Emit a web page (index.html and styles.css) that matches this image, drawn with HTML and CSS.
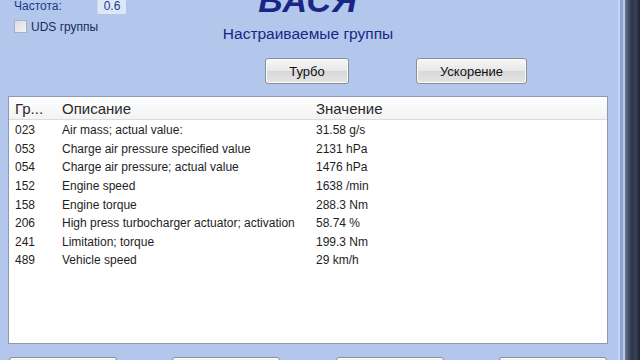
FILE: index.html
```html
<!DOCTYPE html>
<html lang="ru">
<head>
    <meta charset="UTF-8">
    <meta name="viewport" content="width=device-width, initial-scale=1.0">
    <title>Настраиваемые группы</title>
    <link rel="stylesheet" href="styles.css">
</head>
<body>
    <div class="window">
        <div class="top">
            <div class="settings">
                <div class="freq">
                    <span class="freq-label">Частота:</span>
                    <span class="freq-value">0.6</span>
                </div>
                <label class="uds">
                    <span class="check"></span>
                    UDS группы
                </label>
            </div>
            <div class="title">
                <div class="logo">ВАСЯ</div>
                <div class="subtitle">Настраиваемые группы</div>
            </div>
        </div>

        <div class="group-buttons">
            <button class="btn btn-turbo">Турбо</button>
            <button class="btn btn-accel">Ускорение</button>
        </div>

        <div class="list">
            <div class="list-head">
                <span class="col-grp">Гр...</span>
                <span class="col-desc">Описание</span>
                <span class="col-val">Значение</span>
            </div>
            <div class="list-row"><span class="col-grp">023</span><span class="col-desc">Air mass; actual value:</span><span class="col-val">31.58 g/s</span></div>
            <div class="list-row"><span class="col-grp">053</span><span class="col-desc">Charge air pressure specified value</span><span class="col-val">2131 hPa</span></div>
            <div class="list-row"><span class="col-grp">054</span><span class="col-desc">Charge air pressure; actual value</span><span class="col-val">1476 hPa</span></div>
            <div class="list-row"><span class="col-grp">152</span><span class="col-desc">Engine speed</span><span class="col-val">1638 /min</span></div>
            <div class="list-row"><span class="col-grp">158</span><span class="col-desc">Engine torque</span><span class="col-val">288.3 Nm</span></div>
            <div class="list-row"><span class="col-grp">206</span><span class="col-desc">High press turbocharger actuator; activation</span><span class="col-val">58.74 %</span></div>
            <div class="list-row"><span class="col-grp">241</span><span class="col-desc">Limitation; torque</span><span class="col-val">199.3 Nm</span></div>
            <div class="list-row"><span class="col-grp">489</span><span class="col-desc">Vehicle speed</span><span class="col-val">29 km/h</span></div>
        </div>

        <div class="bottom-buttons">
            <button class="btn btn-bottom"></button>
            <button class="btn btn-bottom"></button>
            <button class="btn btn-bottom"></button>
            <button class="btn btn-bottom"></button>
        </div>
    </div>
    <div class="frame"></div>
</body>
</html>
```

FILE: styles.css
```css
body {
    margin: 0;
    height: 360px;
    overflow: hidden;
    display: flex;
    font-family: "Liberation Sans", Arial, sans-serif;
    background-color: #b3c7ec;
}

.window {
    width: 600px;
    padding: 0 10px 0 8px;
    display: flex;
    flex-direction: column;
    background-color: #b3c7ec;
}

.window > * {
    flex-shrink: 0;
}

.top {
    height: 58px;
    display: grid;
    grid-template-columns: 1fr auto 1fr;
}

.settings {
    padding-left: 6px;
    font-size: 12px;
}

.freq {
    display: flex;
    align-items: flex-start;
    height: 15px;
}

.freq-label {
    width: 83px;
    color: #1c3988;
    line-height: 13px;
}

.freq-value {
    width: 28px;
    height: 14px;
    line-height: 13px;
    text-align: center;
    color: #1c3988;
    background-color: #dde7f8;
    border-left: 1px solid #c9d6ee;
}

.uds {
    display: flex;
    align-items: center;
    gap: 4px;
    margin-top: 5px;
    color: #1b2a5c;
    line-height: 12px;
}

.check {
    width: 11px;
    height: 11px;
    border: 1px solid #a7b1c2;
    background: linear-gradient(135deg, #d8dbe0, #f4f5f7);
}

.title {
    text-align: center;
    color: #1a2685;
}

.logo {
    font-size: 34px;
    font-weight: bold;
    font-style: italic;
    line-height: 34px;
    margin-top: -17px;
    letter-spacing: 1px;
}

.subtitle {
    font-size: 15.5px;
    margin-top: 8px;
}

.group-buttons {
    display: flex;
    gap: 67px;
    padding-left: 257px;
    height: 38px;
}

.btn {
    font-family: "Liberation Sans", Arial, sans-serif;
    font-size: 13px;
    color: #111;
    border: 1px solid #8c8f94;
    border-radius: 3px;
    background: linear-gradient(#f6f6f6, #e8e8e8 50%, #d9d9d9 51%, #e4e4e4);
    box-shadow: inset 0 0 0 1px #fbfbfb;
    padding: 0;
}

.btn-turbo {
    width: 84px;
    height: 26px;
}

.btn-accel {
    width: 111px;
    height: 26px;
}

.list {
    height: 246px;
    background-color: #fff;
    border: 1px solid #8d9bb0;
    font-size: 12px;
    color: #1e1e1e;
}

.list-head {
    display: flex;
    height: 22px;
    align-items: center;
    font-size: 15px;
    color: #2a2a2a;
    background: linear-gradient(#ffffff, #f3f3f3);
    border-bottom: 1px solid #d9dde3;
    margin-bottom: 1px;
}

.list-row {
    display: flex;
    height: 18.6px;
    align-items: center;
}

.col-grp {
    width: 47px;
    padding-left: 6px;
}

.col-desc {
    width: 254px;
}

.bottom-buttons {
    display: flex;
    justify-content: space-between;
    padding: 13px 1px 0 1px;
}

.btn-bottom {
    width: 108px;
    height: 26px;
}

.frame {
    flex: 1;
    background: linear-gradient(to right,
        #c6d5f1 0, #c6d5f1 2px,
        #8ea4d0 2px, #8ea4d0 5px,
        #b8c8e8 5px, #b8c8e8 7px,
        #6e7a96 7px, #4a5470 10px,
        #2e3548 14px, #3a4158 18px, #1e2232 22px);
}
```
